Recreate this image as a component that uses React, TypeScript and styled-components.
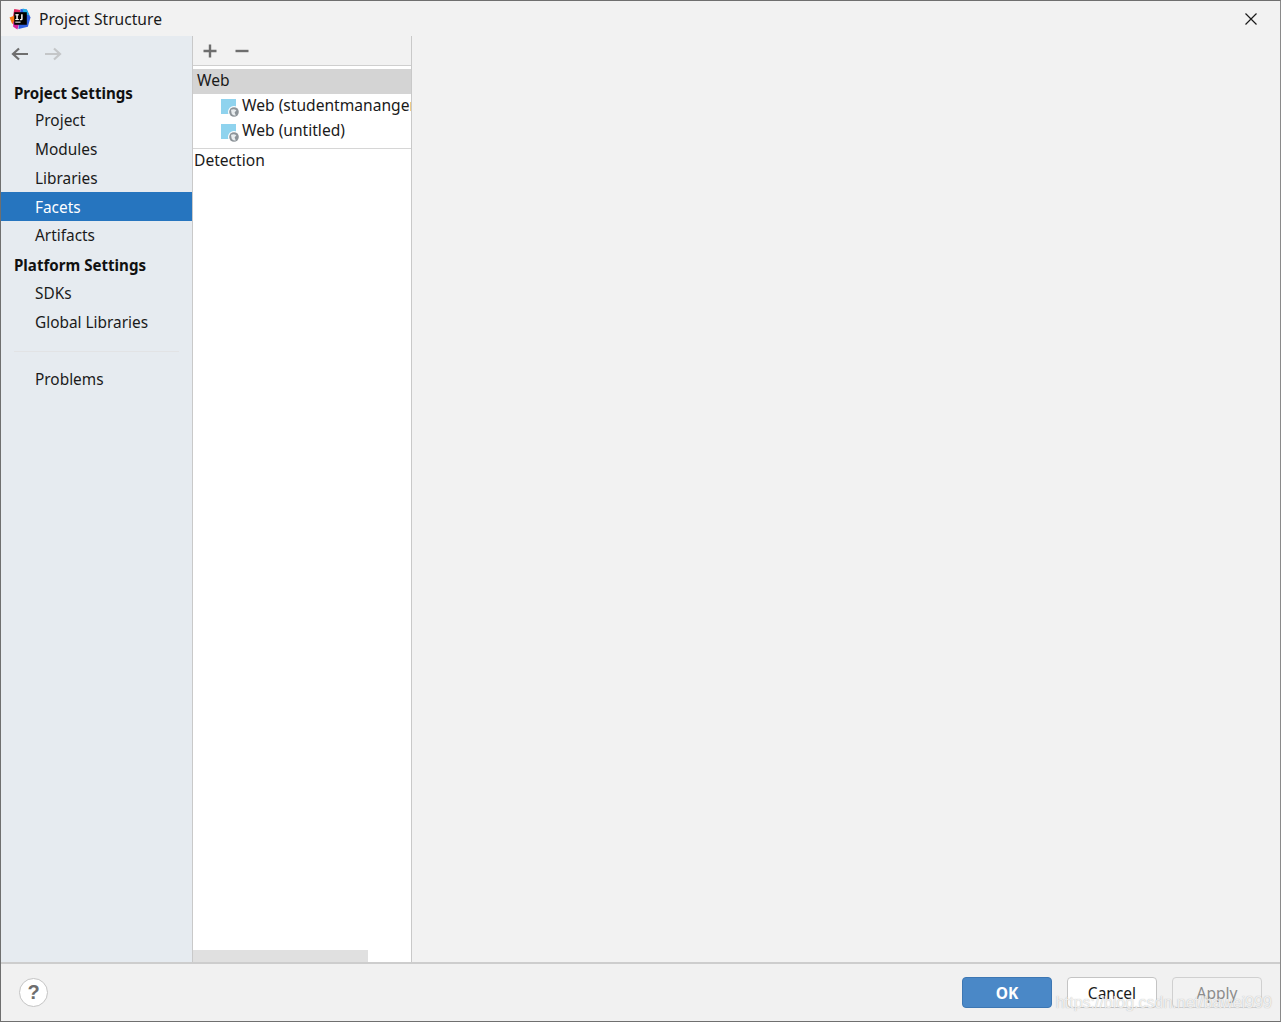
import React from 'react';
import styled, { createGlobalStyle } from 'styled-components';

const GlobalStyle = createGlobalStyle`
  html, body {
    margin: 0;
    padding: 0;
    background: #f2f2f2;
  }
  * {
    box-sizing: border-box;
  }
`;

const settingsItems = ['Project', 'Modules', 'Libraries', 'Facets', 'Artifacts'];
const platformItems = ['SDKs', 'Global Libraries'];
const webFacets = ['Web (studentmananger)', 'Web (untitled)'];

const AppLogo = () => (
  <svg width="22" height="22" viewBox="0 0 21 21">
    <path d="M5 1 L11 2 L8 12 L3 13 Z" fill="#e0245e" />
    <path d="M0.5 9 L6 7 L7 15 L3 15 Z" fill="#f97a12" />
    <path d="M4 13 L10 14 L8 20.5 L4 18 Z" fill="#d6249f" />
    <path d="M11 1 L17 1.5 L20.5 9 L18 18 L9 20 Z" fill="#2f5fe0" />
    <path d="M13 0.5 L17 1.5 L19.5 7 L14 6 Z" fill="#20b0e8" />
    <rect x="5" y="4" width="12" height="12" fill="#000" />
    <rect x="6" y="13" width="5" height="1" fill="#fff" />
    <rect x="7" y="6" width="1.4" height="5.5" fill="#fff" />
    <rect x="6" y="6" width="3.4" height="1" fill="#fff" />
    <rect x="6" y="10.5" width="3.4" height="1" fill="#fff" />
    <path d="M11.6 6 H13 V10.4 Q13 11.6 11.8 11.6 H10.4 V10.6 H11.6 Z" fill="#fff" />
  </svg>
);

const CloseIcon = () => (
  <svg width="14" height="14" viewBox="0 0 14 14">
    <path d="M1.5 1.5 L12.5 12.5 M12.5 1.5 L1.5 12.5" stroke="#1a1a1a" strokeWidth="1.2" fill="none" />
  </svg>
);

const ArrowIcon = ({ dir, color }: { dir: 'left' | 'right'; color: string }) => (
  <svg width="18" height="14" viewBox="0 0 18 14">
    <path
      d={dir === 'left' ? 'M17 7 H2 M8 1.5 L2 7 L8 12.5' : 'M1 7 H16 M10 1.5 L16 7 L10 12.5'}
      stroke={color}
      strokeWidth="2.2"
      fill="none"
    />
  </svg>
);

const PlusIcon = () => (
  <svg width="14" height="14" viewBox="0 0 14 14">
    <path d="M7 0.5 V13.5 M0.5 7 H13.5" stroke="#6e6e6e" strokeWidth="2.4" fill="none" />
  </svg>
);

const MinusIcon = () => (
  <svg width="14" height="14" viewBox="0 0 14 14">
    <path d="M0.5 7 H13.5" stroke="#6e6e6e" strokeWidth="2.4" fill="none" />
  </svg>
);

const WebFacetIcon = () => (
  <svg width="19" height="19" viewBox="0 0 19 19">
    <rect x="0" y="0" width="15" height="15" fill="#8fd3ee" />
    <circle cx="13" cy="13" r="6" fill="#fff" />
    <circle cx="13" cy="13" r="4.8" fill="#8d9499" />
    <path d="M10 10.8 Q13 9.6 15.4 11.2 L13.6 13.4 L14.8 16.4 Q11.8 17 10.6 14.6 Z" fill="#e8ecee" />
  </svg>
);

const App: React.FC = () => (
  <>
    <GlobalStyle />
    <Dialog>
      <TitleBar>
        <LogoSlot>
          <AppLogo />
        </LogoSlot>
        <TitleText>Project Structure</TitleText>
        <CloseSlot>
          <CloseIcon />
        </CloseSlot>
      </TitleBar>

      <Body>
        <Sidebar>
          <NavArrows>
            <ArrowIcon dir="left" color="#6e6e6e" />
            <ArrowIcon dir="right" color="#c4c6c8" />
          </NavArrows>
          <SectionHeader $first>Project Settings</SectionHeader>
          {settingsItems.map((item) => (
            <NavItem key={item} $selected={item === 'Facets'} $raised={item === 'Artifacts'}>
              {item}
            </NavItem>
          ))}
          <SectionHeader>Platform Settings</SectionHeader>
          {platformItems.map((item) => (
            <NavItem key={item} $raised>
              {item}
            </NavItem>
          ))}
          <SideDivider />
          <NavItem $raised>Problems</NavItem>
        </Sidebar>

        <TreePanel>
          <TreeToolbar>
            <ToolButton>
              <PlusIcon />
            </ToolButton>
            <ToolButton>
              <MinusIcon />
            </ToolButton>
          </TreeToolbar>
          <TreeBody>
            <TreeGroup>Web</TreeGroup>
            {webFacets.map((facet) => (
              <TreeRow key={facet}>
                <WebFacetIcon />
                <span>{facet}</span>
              </TreeRow>
            ))}
            <DetectionRow>Detection</DetectionRow>
            <HorizontalThumb />
          </TreeBody>
        </TreePanel>

        <DetailPanel />
      </Body>

      <Footer>
        <HelpButton>?</HelpButton>
        <Buttons>
          <DialogButton $variant="primary">OK</DialogButton>
          <DialogButton $variant="default">Cancel</DialogButton>
          <DialogButton $variant="disabled">Apply</DialogButton>
        </Buttons>
        <Watermark>https://blog.csdn.net/bawei999</Watermark>
      </Footer>
    </Dialog>
  </>
);

export default App;

const Dialog = styled.div`
  width: 1281px;
  height: 1022px;
  display: flex;
  flex-direction: column;
  overflow: hidden;
  background: #f2f2f2;
  border: 1px solid #6f6f6f;
  border-right-color: #8a8a8a;
  font-family: 'Noto Sans', 'Open Sans', sans-serif;
  font-size: 15.5px;
  color: #1a1a1a;
`;

const TitleBar = styled.div`
  height: 35px;
  flex: none;
  display: flex;
  align-items: center;
`;

const LogoSlot = styled.div`
  width: 38px;
  padding: 0 0 0 8px;
  display: flex;
`;

const TitleText = styled.div`
  flex: 1;
  font-size: 15.6px;
`;

const CloseSlot = styled.div`
  width: 36px;
  display: flex;
`;

const Body = styled.div`
  flex: 1;
  min-height: 0;
  display: flex;
`;

const Sidebar = styled.nav`
  width: 192px;
  flex: none;
  background: #e6ebf0;
  border-right: 1px solid #c9c9c9;
`;

const NavArrows = styled.div`
  height: 43px;
  padding: 1px 0 9px 10px;
  display: flex;
  align-items: center;
  gap: 15px;
`;

const SectionHeader = styled.div<{ $first?: boolean }>`
  height: ${(p) => (p.$first ? '26px' : '29px')};
  padding-left: 13px;
  padding-top: ${(p) => (p.$first ? '2px' : '0')};
  display: flex;
  align-items: center;
  font-weight: 700;
  font-size: 15.1px;
  color: #111;
`;

const NavItem = styled.div<{ $selected?: boolean; $raised?: boolean }>`
  height: 29px;
  padding-left: 34px;
  padding-top: ${(p) => (p.$raised ? '0' : '1px')};
  padding-bottom: ${(p) => (p.$raised ? '1px' : '0')};
  display: flex;
  align-items: center;
  font-size: 15.4px;
  background: ${(p) => (p.$selected ? '#2675bf' : 'transparent')};
  color: ${(p) => (p.$selected ? '#ffffff' : '#1a1a1a')};
`;

const SideDivider = styled.div`
  height: 1px;
  margin: 14px 13px 13px;
  background: #e2e3e5;
`;

const TreePanel = styled.div`
  width: 219px;
  flex: none;
  display: flex;
  flex-direction: column;
  border-right: 1px solid #c9c9c9;
`;

const TreeToolbar = styled.div`
  height: 30px;
  flex: none;
  padding: 0 0 0 10px;
  display: flex;
  align-items: center;
  gap: 18px;
  border-bottom: 1px solid #cfcfcf;
`;

const ToolButton = styled.div`
  width: 14px;
  height: 14px;
  display: flex;
`;

const TreeBody = styled.div`
  position: relative;
  flex: 1;
  padding-top: 3px;
  background: #ffffff;
  font-size: 15.6px;
  overflow: hidden;
`;

const TreeGroup = styled.div`
  height: 25px;
  padding-left: 4px;
  padding-bottom: 4px;
  display: flex;
  align-items: center;
  background: #d4d4d4;
`;

const TreeRow = styled.div`
  height: 25px;
  padding-left: 28px;
  padding-bottom: 4px;
  display: flex;
  align-items: center;
  gap: 2px;
  white-space: nowrap;

  svg {
    flex: none;
    margin-top: 7px;
  }
`;

const DetectionRow = styled.div`
  height: 25px;
  margin-top: 4px;
  padding: 0 0 2px 1px;
  border-top: 1px solid #d6d6d6;
  display: flex;
  align-items: center;
`;

const HorizontalThumb = styled.div`
  position: absolute;
  left: 0;
  bottom: 0;
  width: 175px;
  height: 12px;
  background: #e0e0e0;
`;

const DetailPanel = styled.div`
  flex: 1;
  background: #f2f2f2;
`;

const Footer = styled.div`
  position: relative;
  height: 59px;
  flex: none;
  display: flex;
  align-items: center;
  justify-content: space-between;
  padding: 0 18px 0 18px;
  border-top: 2px solid #cdcdcd;
  background: #f1f1f1;
`;

const HelpButton = styled.div`
  width: 29px;
  height: 29px;
  border-radius: 50%;
  border: 1px solid #c4c4c4;
  background: #ffffff;
  display: flex;
  align-items: center;
  justify-content: center;
  font-family: 'Liberation Sans', sans-serif;
  font-size: 20px;
  font-weight: 700;
  color: #6e6e6e;
`;

const Buttons = styled.div`
  display: flex;
  gap: 15px;
`;

const buttonColors = {
  primary: { bg: '#4a88c7', border: '#3d77b3', color: '#ffffff', weight: 700 },
  default: { bg: '#ffffff', border: '#c4c4c4', color: '#1a1a1a', weight: 400 },
  disabled: { bg: '#f2f2f2', border: '#d0d0d0', color: '#8c8c8c', weight: 400 },
};

const DialogButton = styled.div<{ $variant: keyof typeof buttonColors }>`
  width: 90px;
  height: 31px;
  border-radius: 4px;
  display: flex;
  align-items: center;
  justify-content: center;
  background: ${(p) => buttonColors[p.$variant].bg};
  border: 1px solid ${(p) => buttonColors[p.$variant].border};
  color: ${(p) => buttonColors[p.$variant].color};
  font-weight: ${(p) => buttonColors[p.$variant].weight};
`;

const Watermark = styled.div`
  position: absolute;
  right: 8px;
  top: 30px;
  font-family: 'Liberation Sans', sans-serif;
  font-size: 16px;
  color: rgba(255, 255, 255, 0.8);
  text-shadow: 0 0 1px rgba(120, 120, 120, 0.6);
  white-space: nowrap;
`;
